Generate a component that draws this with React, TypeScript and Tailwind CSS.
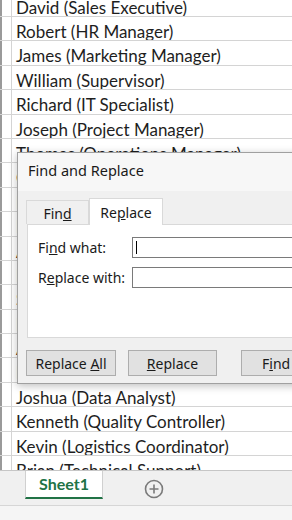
import React from 'react';

const names = [
  'David (Sales Executive)',
  'Robert (HR Manager)',
  'James (Marketing Manager)',
  'William (Supervisor)',
  'Richard (IT Specialist)',
  'Joseph (Project Manager)',
  'Thomas (Operations Manager)',
  'Charles (Finance Officer)',
  'Daniel (Sales Manager)',
  'Matthew (Accountant)',
  'Anthony (Team Leader)',
  'Mark (Product Manager)',
  'Steven (Web Developer)',
  'Paul (Business Analyst)',
  'Andrew (Network Engineer)',
  'Edward (HR Assistant)',
  'Joshua (Data Analyst)',
  'Kenneth (Quality Controller)',
  'Kevin (Logistics Coordinator)',
  'Brian (Technical Support)',
  'George (Recruiter)',
];

const Sheet: React.FC = () => (
  <div className="h-[470px] overflow-hidden">
    <div className="-mt-[7.4px]">
      {names.map((n) => (
        <div key={n} className="flex h-[24.4px] border-b border-[#d4d4d4] overflow-hidden">
          <div className="w-[12px] shrink-0 border-r border-[#d4d4d4] border-l-2 border-l-[#9a9a9a]" />
          <div className="pl-[4px] pt-[5px] text-[17px] leading-[20px] text-[#1e1e1e] whitespace-nowrap font-['Lato',sans-serif]">
            {n}
          </div>
        </div>
      ))}
    </div>
  </div>
);

const Dialog: React.FC = () => (
  <div className="absolute left-[17px] top-[152px] w-[320px] h-[232px] bg-[#f0f0f0] border border-[#a0a0a0] shadow-[0_2px_8px_rgba(0,0,0,0.25)] font-['Noto_Sans',sans-serif] text-[14px] text-[#1a1a1a]">
    <div className="h-[38px] bg-[#f7f7f7] pl-[10px] pt-[7px] text-[14.5px]">Find and Replace</div>
    <div className="pl-[8px] pr-0 pt-[6px]">
      <div className="flex items-end h-[27px]">
        <div className="w-[63px] h-[24px] border border-b-0 border-[#d9d9d9] bg-[#f0f0f0] flex items-center justify-center pt-[2px]">
          Fin<u>d</u>
        </div>
        <div className="w-[74px] h-[27px] border border-b-0 border-[#d9d9d9] bg-white flex items-center justify-center relative z-10 -mb-px">
          Re<u>p</u>lace
        </div>
      </div>
      <div className="ml-px h-[114px] bg-white border border-[#d9d9d9] pt-[12px] pl-[10px]">
        <div className="flex items-center h-[21px]">
          <span className="w-[94px]">Fi<u>n</u>d what:</span>
          <div className="flex-1 h-[21px] border border-[#7a7a7a] bg-white flex items-center pl-[3px]">
            <div className="w-px h-[13px] bg-black" />
          </div>
        </div>
        <div className="flex items-center h-[21px] mt-[9px]">
          <span className="w-[94px]">R<u>e</u>place with:</span>
          <div className="flex-1 h-[21px] border border-[#7a7a7a] bg-white" />
        </div>
      </div>
      <div className="flex gap-[12px] mt-[12px]">
        <button className="w-[90px] h-[26px] bg-[#e1e1e1] border border-[#adadad]">
          Replace <u>A</u>ll
        </button>
        <button className="w-[89px] h-[26px] bg-[#e1e1e1] border border-[#adadad]">
          <u>R</u>eplace
        </button>
        <button className="ml-[12px] w-[90px] h-[26px] bg-[#e1e1e1] border border-[#adadad] shrink-0">
          F<u>i</u>nd All
        </button>
      </div>
    </div>
  </div>
);

const TabBar: React.FC = () => (
  <div className="h-[50px] border-t border-[#c6c6c6] bg-[#f0f0f0] flex flex-col">
    <div className="h-[34px] flex items-start pl-[25px]">
      <div className="w-[78px] h-[28px] bg-white border-x border-[#d0d0d0] border-b-2 border-b-[#217346] flex items-center justify-center text-[16px] font-bold text-[#217346] font-['Lato',sans-serif]">
        Sheet1
      </div>
      <div className="ml-[41px] mt-[8px]">
        <svg width="20" height="20" viewBox="0 0 20 20" fill="none" stroke="#7a7a7a" strokeWidth="1.6">
          <circle cx="10" cy="10" r="8.5" />
          <path d="M10 5.5v9M5.5 10h9" />
        </svg>
      </div>
    </div>
    <div className="flex-1 border-t border-[#d6d6d6] bg-[#f5f5f5]" />
  </div>
);

export default function App() {
  return (
    <div className="relative w-[292px] h-[520px] overflow-hidden bg-white">
      <Sheet />
      <TabBar />
      <Dialog />
    </div>
  );
}
